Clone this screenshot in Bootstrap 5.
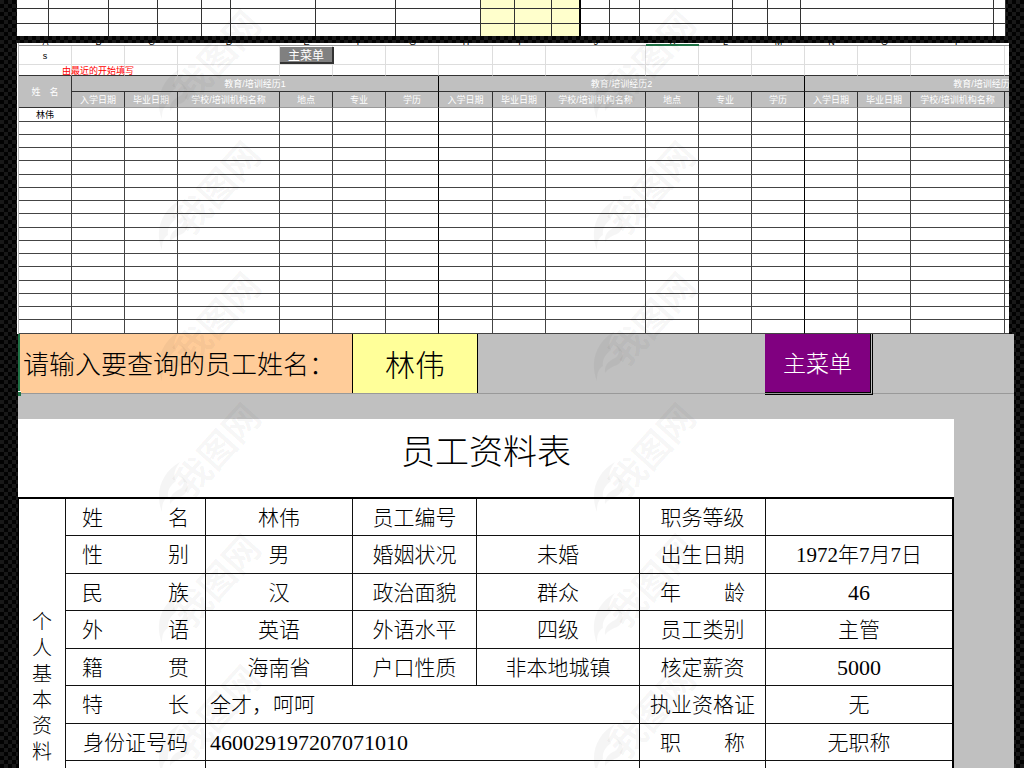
<!DOCTYPE html>
<html lang="zh-CN">
<head>
<meta charset="utf-8">
<meta name="viewport" content="width=device-width, initial-scale=1">
<title>员工资料表</title>
<link href="https://cdn.jsdelivr.net/npm/bootstrap@5.3.0/dist/css/bootstrap.min.css" rel="stylesheet">
<style>
  body {
    font-family: "Liberation Serif", "Noto Sans CJK SC", sans-serif;
    font-weight: 300;
    color: #000;
    background-color: #060606;
    background-image: conic-gradient(#020202 25%, #181818 0 50%, #020202 0 75%, #181818 0);
    background-size: 8px 8px;
  }
  .grid-table { table-layout: fixed; border-collapse: separate; border-spacing: 0; }
  .grid-table td, .grid-table th { padding: 0; font-weight: inherit; white-space: nowrap; border: 0 solid #333; }

  /* staff list */
  .sheet-list { margin-right: 18px; background: #fff; }
  .sheet-list td { height: 15px; border-width: 0 1px 1px 0; }
  .sheet-list tr:first-child td { height: 9px; }
  .sheet-list tr:last-child td { height: 12px; border-bottom-width: 0; }
  .sheet-list td.pale { background: #ffc; }
  .sheet-list td.pale-end { border-right: 2px solid #000; }

  /* education history */
  .sheet-edu { margin: 7px 15px 0 0; padding-left: 1px; background: #fff; font-family: "Liberation Sans", "Noto Sans CJK SC", sans-serif; font-size: 9px; font-weight: 400; line-height: 12px; }
  .sheet-edu .grid-table { width: 1145px; border-left: 1px solid #bbb; }
  .sheet-edu td { height: 13px; border-width: 0 1px 1px 0; border-color: #444; text-align: center; }
  .sheet-edu .tall td { height: 14px; }
  .sheet-edu .letters td { height: 3px; border-width: 0 0 1px; border-color: #999; }
  .sheet-edu .letters div { height: 2px; line-height: 6px; overflow: hidden; display: flex; align-items: end; justify-content: center; }
  .sheet-edu .letters .chosen { border-color: #1f7346; border-bottom-width: 2px; }
  .sheet-edu .letters .chosen div { height: 1px; }
  .sheet-edu .free td { border-color: #ddd; height: 19px; padding-top: 1px; }
  .sheet-edu .free.note td { height: 11px; padding-top: 0; border-bottom-color: #333; }
  .sheet-edu .note div { height: 10px; line-height: 12px; color: #f00; }
  .sheet-edu th { height: 16px; background: #c0c0c0; color: #fff; border-width: 0 1px 1px 0; border-color: #333; text-align: center; }
  .sheet-edu th.field { border-bottom-color: #999; }
  .sheet-edu .block-end { border-right: 1px solid #000; }
  .menu-small { width: 54px; height: 17px; font-size: 12px; line-height: 16px; color: #fff; background: #808080; border: 0 solid #333; border-width: 0 2px 2px 0; font-family: "Noto Sans CJK SC", sans-serif; }

  /* staff profile */
  .sheet-profile { margin: 0 10px 0 1px; background: #c0c0c0; }
  .query { height: 60px; border-bottom: 1px solid #999; }
  .query-label { width: 334px; padding: 4px 0 0 3px; font-size: 26px; background: #fc9; border-left: 2px solid #1f7346; }
  .query-handle { left: 0; bottom: -3px; width: 3px; height: 5px; background: #1f7346; border-top: 1px solid #fff; }
  .query-input { width: 126px; padding: 4px 0 0; font-size: 30px; font-weight: 300; background: #ff9; border: solid #000; border-width: 0 1px; border-radius: 0; }
  .menu-large { width: 108px; height: 61px; margin-right: 141px; padding: 4px 0 0; font-size: 23px; font-weight: 300; color: #fff; background: purple; border: 0 double #000; border-width: 0 3px 3px 0; background-clip: padding-box; z-index: 1; }
  .profile { margin: 25px 60px 0 0; background: #fff; }
  .profile-title { height: 78px; padding-top: 3px; font-size: 34px; line-height: 62px; }
  .profile-table { border: solid #000; border-width: 2px 2px 0 1px; font-size: 21px; line-height: 30px; }
  .profile-table td, .profile-table th { height: 37px; padding-top: 1px; border-color: #111; border-width: 0 1px 1px 0; text-align: center; }
  .profile-table tr:nth-child(even) th, .profile-table tr:nth-child(even) td { height: 38px; }
  .profile-table tr > :last-child { border-right-width: 0; }
  .profile-table .spread { display: flex; justify-content: space-between; padding: 0 16px; }
  .profile-table .spread-tight { padding: 0 20px; }
  .profile-table .figures { font-size: 22px; }
  .profile-table td.from-left { text-align: left; padding-left: 4px; }
  .profile-table .side { padding-top: 110px; font-size: 20px; line-height: 26px; vertical-align: top; }
  .side span { display: block; }

  .watermark { left: 0; top: 0; z-index: 2; pointer-events: none; }
</style>
</head>
<body>
<div class="vh-100 overflow-hidden position-relative">
<main style="padding-left:17px">
  <section class="sheet-list" aria-label="员工名册">
    <table class="grid-table w-100" id="list">
      <colgroup>
        <col style="width:32px"><col style="width:60px"><col style="width:49px"><col style="width:44px"><col style="width:29px"><col style="width:85px"><col style="width:80px"><col style="width:85px"><col style="width:34px"><col style="width:37px"><col style="width:29px"><col style="width:29px"><col style="width:30px"><col style="width:93px"><col style="width:35px"><col style="width:33px"><col style="width:193px"><col style="width:12px">
      </colgroup>
      <tbody></tbody>
    </table>
  </section>

  <section class="sheet-edu overflow-hidden" aria-label="教育培训经历">
    <table class="grid-table" id="edu">
      <colgroup>
        <col style="width:53px"><col style="width:53px"><col style="width:53px"><col style="width:102px"><col style="width:53px"><col style="width:53px"><col style="width:53px"><col style="width:54px"><col style="width:53px"><col style="width:100px"><col style="width:53px"><col style="width:53px"><col style="width:53px"><col style="width:53px"><col style="width:53px"><col style="width:94px"><col style="width:53px"><col style="width:53px"><col style="width:53px">
      </colgroup>
      <tbody></tbody>
    </table>
  </section>

  <section class="sheet-profile">
    <div class="query d-flex position-relative">
      <label class="query-label d-flex align-items-center text-nowrap" for="staff">请输入要查询的员工姓名：</label>
      <input class="query-input text-center" id="staff" type="text" value="林伟">
      <button class="menu-large ms-auto" type="button">主菜单</button>
      <span class="query-handle position-absolute"></span>
    </div>
    <div class="profile">
      <h1 class="profile-title text-center fw-light m-0">员工资料表</h1>
      <table class="grid-table profile-table w-100">
        <colgroup>
          <col style="width:47px"><col style="width:140px"><col style="width:147px"><col style="width:124px"><col style="width:163px"><col style="width:126px"><col>
        </colgroup>
        <tbody>
          <tr><th class="side" rowspan="8"><span>个</span><span>人</span><span>基</span><span>本</span><span>资</span><span>料</span></th>
            <th><div class="spread"><span>姓</span><span>名</span></div></th><td>林伟</td><th>员工编号</th><td></td><th>职务等级</th><td></td></tr>
          <tr><th><div class="spread"><span>性</span><span>别</span></div></th><td>男</td><th>婚姻状况</th><td>未婚</td><th>出生日期</th><td>1972年7月7日</td></tr>
          <tr><th><div class="spread"><span>民</span><span>族</span></div></th><td>汉</td><th>政治面貌</th><td>群众</td><th><div class="spread spread-tight"><span>年</span><span>龄</span></div></th><td class="figures">46</td></tr>
          <tr><th><div class="spread"><span>外</span><span>语</span></div></th><td>英语</td><th>外语水平</th><td>四级</td><th>员工类别</th><td>主管</td></tr>
          <tr><th><div class="spread"><span>籍</span><span>贯</span></div></th><td>海南省</td><th>户口性质</th><td>非本地城镇</td><th>核定薪资</th><td class="figures">5000</td></tr>
          <tr><th><div class="spread"><span>特</span><span>长</span></div></th><td class="from-left" colspan="3">全才，呵呵</td><th>执业资格证</th><td>无</td></tr>
          <tr><th>身份证号码</th><td class="from-left figures" colspan="3">460029197207071010</td><th><div class="spread spread-tight"><span>职</span><span>称</span></div></th><td>无职称</td></tr>
          <tr><th></th><td colspan="3"></td><th></th><td></td></tr>
        </tbody>
      </table>
    </div>
  </section>
</main>

<svg class="watermark position-absolute w-100 h-100" aria-hidden="true">
  <defs>
    <g id="mark" fill="#000" fill-opacity=".04">
      <path d="M-48 54C-56 34-48 14-30 4C-36 12-37 18-34 23C-39 27-43 32-42 39C-47 42-48 47-48 54Z"/>
      <path d="M-40 46C-41 39-37 34-30 31C-24 27-26 20-30 18C-20 22-20 34-28 38C-33 40-37 42-40 46Z"/>
      <text transform="rotate(-48)" x="-43" y="13" font-size="36" font-weight="700" font-family="Noto Sans CJK SC, sans-serif">我图网</text>
    </g>
  </defs>
  <g id="marks"></g>
</svg>
</div>

<script src="https://cdn.jsdelivr.net/npm/bootstrap@5.3.0/dist/js/bootstrap.bundle.min.js"></script>
<script>
  const range = n => [...Array(n).keys()];

  // staff list: three empty rows, the pale columns are 8 to 10
  document.querySelector('#list tbody').innerHTML = range(3).map(() =>
    '<tr>' + range(18).map(c => `<td class="${c > 7 && c < 11 ? 'pale' : ''} ${c === 10 ? 'pale-end' : ''}"></td>`).join('') + '</tr>').join('');

  // education history: 19 columns in three blocks of six after the name
  const end = c => c > 0 && c % 6 === 0 ? 'block-end' : '';
  const fields = ['入学日期', '毕业日期', '学校/培训机构名称', '地点', '专业', '学历'];
  const row = (cls, cell) => `<tr class="${cls}">` + range(19).map(cell).join('') + '</tr>';
  let html = row('letters', c => `<td class="${c === 10 ? 'chosen' : ''}"><div>${'ABCDEFGHIJKLMNOP'[c] || ''}</div></td>`);
  html += row('free', c => `<td>${c === 0 ? 's' : c === 4 ? '<button class="menu-small p-0 d-block" type="button">主菜单</button>' : ''}</td>`);
  html += row('free note', c => `<td>${c === 1 ? '<div class="d-flex justify-content-center">由最近的开始填写</div>' : ''}</td>`);
  html += '<tr><th rowspan="2">姓&emsp;名</th>' + [1, 2, 3].map(n => `<th class="block-end" colspan="6">教育/培训经历${n}</th>`).join('') + '</tr>';
  html += '<tr>' + range(18).map(c => `<th class="field ${end(c + 1)}">${c < 15 ? fields[c % 6] : ''}</th>`).join('') + '</tr>';
  html += range(17).map(r => row(r % 4 === 0 ? 'tall' : '', c => `<td class="${end(c)}">${r === 0 && c === 0 ? '林伟' : ''}</td>`)).join('');
  document.querySelector('#edu tbody').innerHTML = html;

  document.querySelector('#marks').innerHTML = range(6).map(r => [210, 645].map(x =>
    `<use href="#mark" x="${x}" y="${65 + r * 131}"/>`).join('')).join('');
</script>
</body>
</html>
